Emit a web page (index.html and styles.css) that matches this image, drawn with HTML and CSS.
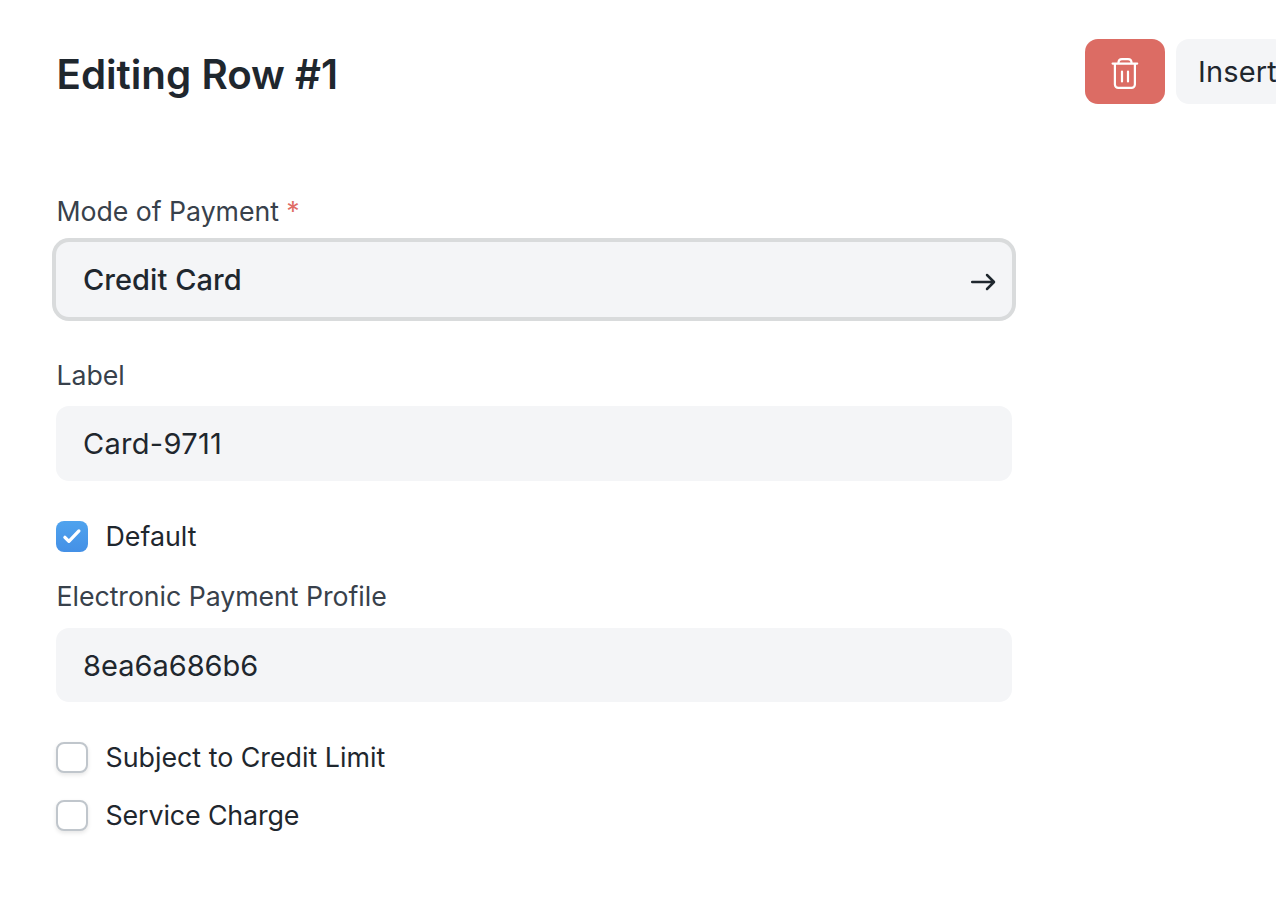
FILE: index.html
```html
<!DOCTYPE html>
<html lang="en">
<head>
<meta charset="utf-8">
<title>Editing Row #1</title>
<link rel="stylesheet" href="styles.css">
</head>
<body>
<header class="header">
  <h1 class="title">Editing Row #1</h1>
  <div class="actions">
    <button class="btn btn-danger" aria-label="Delete">
      <svg class="trash" viewBox="0 0 28 34" fill="none" stroke="#fff" stroke-width="2.2" stroke-linecap="round" stroke-linejoin="round">
        <path d="M1.600 7.600H26.200M3.900 7.600V28.500a3.400 3.400 0 0 0 3.400 3.400H20.500A3.400 3.400 0 0 0 23.900 28.500V7.600M7.400 7.200C7.400 4.500 8.700 3.100 11 3.100H17C19.300 3.100 20.600 4.500 20.600 7.200M11 15.500V25.500M17 15.500V25.500"/>
      </svg>
    </button>
    <button class="btn btn-insert">Insert</button>
  </div>
</header>
<main class="form">
  <div class="field">
    <label class="label">Mode of Payment <span class="required">*</span></label>
    <div class="input focused"><span>Credit Card</span>
      <svg class="arrow" viewBox="0 0 26 18" fill="none" stroke="#1f272e" stroke-width="2.500" stroke-linecap="round" stroke-linejoin="round"><path d="M2.200 9H23.800M17 2L24 9L17 16"/></svg>
    </div>
  </div>
  <div class="field second">
    <label class="label">Label</label>
    <div class="input card-number">Card-9711</div>
  </div>
  <label class="check default"><span class="box checked"><svg class="tick" viewBox="0 0 32 31" fill="none" stroke="#fff" stroke-width="3.300" stroke-linecap="round" stroke-linejoin="round"><path d="M8.900 16.300L12.900 20.300L22.900 9.900"/></svg></span><span class="check-text">Default</span></label>
  <div class="field third">
    <label class="label">Electronic Payment Profile</label>
    <div class="input profile">8ea6a686b6</div>
  </div>
  <label class="check limit"><span class="box"></span><span class="check-text">Subject to Credit Limit</span></label>
  <label class="check charge"><span class="box"></span><span class="check-text">Service Charge</span></label>
</main>
</body>
</html>
```
FILE: styles.css
```css
* { box-sizing: border-box; }
body {
  margin: 0;
  height: 910px;
  overflow: hidden;
  background: #fff;
  color: #1f272e;
  font-family: Inter, sans-serif;
}
.header {
  display: flex;
  justify-content: space-between;
  height: 104px;
  padding: 39px 0 0 56px;
}
.title {
  margin: 0;
  padding: 6px 0 0 0.5px;
  font-size: 40.3px;
  line-height: 60px;
  font-weight: 600;
}
.actions {
  display: flex;
  gap: 11px;
  width: 191px;
  overflow: hidden;
}
.btn {
  flex: none;
  height: 65px;
  padding: 0;
  border: 0;
  border-radius: 13px;
  font: 400 29px/65px Inter, sans-serif;
  color: #1f272e;
}
.btn-danger {
  display: flex;
  align-items: center;
  justify-content: center;
  width: 80px;
  padding-top: 2px;
  background: #dc6c64;
}
.trash { width: 28px; height: 34px; }
.btn-insert {
  width: 111px;
  padding-left: 22px;
  background: #f4f5f7;
  text-align: left;
  letter-spacing: 0.15px;
  white-space: nowrap;
}
.form {
  display: flex;
  flex-direction: column;
  width: 956px;
  margin: 92px 0 0 56px;
}
.label {
  display: block;
  height: 46px;
  padding-left: 0.5px;
  font-size: 26.7px;
  line-height: 30px;
  letter-spacing: -0.04px;
  color: #38414b;
}
.required { color: #e06c65; }
.input {
  display: flex;
  align-items: center;
  justify-content: space-between;
  height: 75px;
  padding: 0 16px 0 27px;
  border-radius: 13px;
  background: #f4f5f7;
  font-size: 29px;
}
.card-number { letter-spacing: 0.3px; }
.focused {
  box-shadow: 0 0 0 4px #d9dbdc;
  font-weight: 500;
  letter-spacing: 0.05px;
}
.arrow { width: 26px; height: 18px; margin-top: 5px; }
.second { margin-top: 43px; }
.profile { height: 74px; }
.check {
  display: flex;
  align-items: center;
  gap: 17.5px;
  height: 31px;
  font-size: 26.8px;
}
.check-text { padding-bottom: 2px; }
.charge .check-text { letter-spacing: -0.12px; }
.default { margin-top: 40px; }
.third { margin-top: 29px; }
.third .label { height: 47px; }
.limit { margin-top: 40px; }
.charge { margin-top: 27px; }
.box {
  width: 32px;
  height: 31px;
  border: 2px solid #c0c6cc;
  border-radius: 8px;
  background: #fff;
  box-shadow: 0 2px 4px rgba(0, 0, 0, 0.1);
}
.checked {
  border: 0;
  background: linear-gradient(#4fa3ee, #4490e6);
  box-shadow: none;
}
.tick { display: block; width: 32px; height: 31px; }
```
